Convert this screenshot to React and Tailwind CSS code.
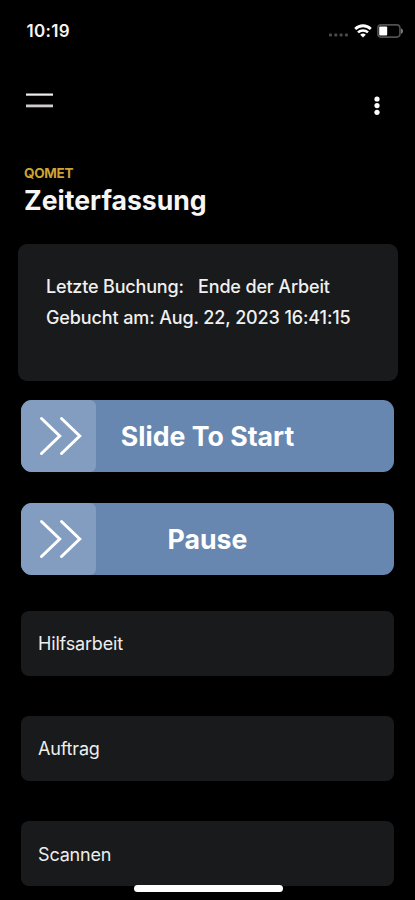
function StatusBar() {
  return (
    <div className="flex h-[62px] items-center justify-between pl-[26.5px] pr-[11px]">
      <span className="text-[17px] font-semibold leading-5 tracking-[0.3px] text-[#f4f4f4]">10:19</span>
      <div className="flex items-center">
        <svg width="20" height="14" viewBox="0 0 20 14" fill="#4b4b4b">
          <rect x="0" y="9.5" width="3" height="3" rx="1" />
          <rect x="5.3" y="9.5" width="3" height="3" rx="1" />
          <rect x="10.6" y="9.5" width="3" height="3" rx="1" />
          <rect x="15.9" y="9.5" width="3" height="3" rx="1" />
        </svg>
        <svg className="ml-[5px]" width="18" height="14" viewBox="0 0 18 14" fill="none" stroke="#fff" strokeWidth="2.8">
          <path d="M1.2 4.9a11.2 11.2 0 0 1 15.6 0" />
          <path d="M4 8.4a7.2 7.2 0 0 1 10 0" strokeWidth="2.5" />
          <path d="M9 13.6 6.2 10.8a4 4 0 0 1 5.6 0Z" fill="#fff" stroke="none" />
        </svg>
        <svg className="ml-[5px]" width="27" height="14" viewBox="0 0 27 14">
          <rect x="0.9" y="0.9" width="22" height="12.2" rx="3" fill="none" stroke="#505050" strokeWidth="1.6" />
          <rect x="2.2" y="2.6" width="8" height="9" rx="1" fill="#fff" />
          <path d="M23.8 4.2c3 1.3 3 4.4 0 5.7Z" fill="#777" />
        </svg>
      </div>
    </div>
  );
}

function Header() {
  return (
    <div className="flex h-[103px] items-start justify-between pl-[25.5px] pr-[35px] pt-[30px]">
      <button aria-label="Menu" className="mt-px">
        <svg width="27" height="16" viewBox="0 0 27 16">
          <rect x="0" y="0.5" width="27" height="2.2" fill="#f0f0f0" />
          <rect x="0" y="11.5" width="27" height="2.8" fill="#d0cccd" />
        </svg>
      </button>
      <button aria-label="Mehr">
        <svg width="6" height="24" viewBox="0 0 6 24" fill="#fff">
          <circle cx="3" cy="7" r="2.6" />
          <circle cx="3" cy="13.6" r="2.6" />
          <circle cx="3" cy="20.3" r="2.6" />
        </svg>
      </button>
    </div>
  );
}

function SlideButton({ label }) {
  return (
    <div className="relative flex h-[72px] items-center justify-center overflow-hidden rounded-[11px] bg-[#6786b0]">
      <div className="absolute inset-y-0 left-0 flex w-[75px] items-center rounded-r-[6px] bg-[#839dc1] pl-[18px]">
        <svg width="44" height="40" viewBox="0 0 44 40" fill="none" stroke="#fff" strokeWidth="3" strokeLinecap="round">
          <path d="M2.5 2.5 20.7 20 2.5 37.5M22.5 2.5 40.7 20l-18.2 17.5" />
        </svg>
      </div>
      <span className="text-[26.7px] font-bold leading-8 text-white">{label}</span>
    </div>
  );
}

function ListItem({ label }) {
  return (
    <div className="flex h-[65px] items-center rounded-lg bg-[#191a1b] pl-[17px] pt-[2px] text-[18px] leading-6 tracking-[-0.17px] text-[#eee]">
      {label}
    </div>
  );
}

export default function App() {
  return (
    <div className="relative h-[900px] w-[415px] overflow-hidden bg-black font-['Inter',sans-serif]">
      <StatusBar />
      <Header />
      <div className="h-[79px] pl-[24px]">
        <div className="text-[13.5px] font-bold leading-4 tracking-[-0.3px] text-[#cda434]">QOMET</div>
        <h1 className="mt-[3px] text-[26.6px] font-bold leading-8 text-[#f6f6f6]">Zeiterfassung</h1>
      </div>
      <section className="ml-[18px] h-[137px] w-[380px] rounded-[9px] bg-[#191a1b] pl-[28px] pt-[28px] text-[18px] font-medium leading-[30.5px] tracking-[-0.12px] text-[#f0f0f0]">
        <div className="flex">
          <span className="w-[152px] tracking-[-0.18px]">Letzte Buchung:</span>
          <span className="tracking-[-0.15px]">Ende der Arbeit</span>
        </div>
        <div>Gebucht am: Aug. 22, 2023 16:41:15</div>
      </section>
      <div className="ml-[21px] mt-[19px] flex w-[373px] flex-col gap-[31px]">
        <SlideButton label="Slide To Start" />
        <SlideButton label="Pause" />
      </div>
      <div className="ml-[21px] mt-[35.6px] flex w-[373px] flex-col gap-[40.4px]">
        <ListItem label="Hilfsarbeit" />
        <ListItem label="Auftrag" />
        <ListItem label="Scannen" />
      </div>
      <div className="absolute left-[134px] top-[885px] h-[7px] w-[149px] rounded-full bg-white" />
    </div>
  );
}
